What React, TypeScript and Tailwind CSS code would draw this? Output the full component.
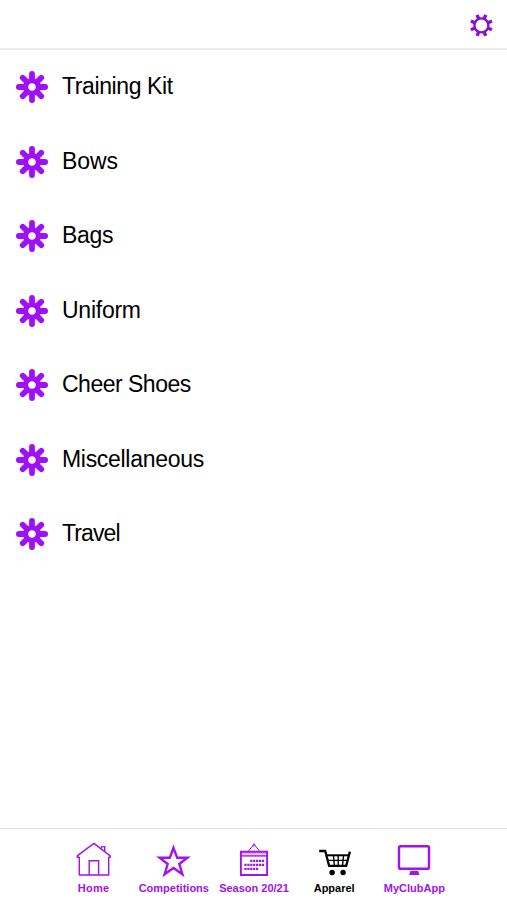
import React from 'react';

interface MenuItem {
  label: string;
  spacing: string;
}

interface TabItem {
  label: string;
  icon: React.ReactNode;
  active?: boolean;
  spacing?: string;
}

const menuItems: MenuItem[] = [
  { label: 'Training Kit', spacing: 'tracking-[-0.4px]' },
  { label: 'Bows', spacing: 'tracking-[-0.1px]' },
  { label: 'Bags', spacing: 'tracking-[-0.3px]' },
  { label: 'Uniform', spacing: 'tracking-[-0.25px]' },
  { label: 'Cheer Shoes', spacing: 'tracking-[-0.5px]' },
  { label: 'Miscellaneous', spacing: 'tracking-[-0.3px]' },
  { label: 'Travel', spacing: 'tracking-[-0.9px]' },
];

const angles = [0, 45, 90, 135, 180, 225, 270, 315];

const GearIcon: React.FC = () => (
  <svg width="26" height="26" viewBox="-13.4 -13.4 26 26" fill="none" stroke="#8a10d0">
    <circle r="7" strokeWidth="2.4" />
    {angles.map((angle) => (
      <path key={angle} d="M0 -7.4V-11.4" strokeWidth="3.4" transform={`rotate(${angle + 22.5})`} />
    ))}
  </svg>
);

const FlowerIcon: React.FC = () => (
  <svg width="34" height="34" viewBox="-17 -17 34 34" fill="none" stroke="#a010f5" strokeLinecap="round">
    <circle r="6.4" strokeWidth="5.2" />
    {angles.map((angle) => (
      <path key={angle} d="M0 -7V-13.1" strokeWidth="5.8" transform={`rotate(${angle})`} />
    ))}
  </svg>
);

const HomeIcon: React.FC = () => (
  <svg width="36" height="36" viewBox="0 0 36 36" fill="none" stroke="currentColor" strokeWidth="1.4">
    <path d="M1.3 13.9L17.9 1.4L34.2 13.9V15.2H32.7V33H3.3V15.2H1.3Z" strokeLinejoin="round" />
    <path d="M13.2 33V18.8H22.6V33M24.9 6.8L26.1 4.6H28.7V9.6" />
  </svg>
);

const StarIcon: React.FC = () => (
  <svg width="36" height="36" viewBox="0 0 36 36" fill="none" stroke="currentColor" strokeWidth="2.4">
    <path d="M17.5 5.8L21.2 15.8H31.4L23.3 22L26.4 32.2L17.5 26L8.6 32.2L11.7 22L3.6 15.8H13.8Z" />
  </svg>
);

const CalendarIcon: React.FC = () => (
  <svg width="36" height="36" viewBox="0 0 36 36" fill="none" stroke="currentColor" strokeWidth="1.9">
    <path d="M4.9 9.8H31.1V33H4.9Z" />
    <path d="M5 13.9H31" strokeWidth="1.4" />
    <path d="M5 11.6H31" strokeWidth="2" opacity=".35" />
    <path d="M12.3 9.2L17.1 3.4M18.9 3.4L23.7 9.2" strokeWidth="1" />
    <circle cx="18" cy="3" r="1.1" strokeWidth="1" />
    <path d="M14.2 18.9H28M8.4 22.9H28M8.4 26.9H22.2" strokeWidth="2.1" strokeDasharray="2.2 .7" />
  </svg>
);

const CartIcon: React.FC = () => (
  <svg width="36" height="36" viewBox="0 0 36 36" fill="none" stroke="currentColor" strokeWidth="2.3">
    <path d="M3.2 9H9.2L13.1 23.8H30.2L33.9 9.6" />
    <path d="M10.5 13.3H32.6" strokeWidth="2" />
    <path d="M11.7 18.4H31.4M17.4 13L18.4 24M22.2 13V24M27.6 13L26.5 24" strokeWidth="1.4" />
    <circle cx="16.1" cy="30.5" r="2.7" fill="currentColor" stroke="none" />
    <circle cx="27.1" cy="30.5" r="2.7" fill="currentColor" stroke="none" />
  </svg>
);

const MonitorIcon: React.FC = () => (
  <svg width="36" height="36" viewBox="0 0 36 36" fill="none" stroke="currentColor" strokeWidth="2.4">
    <rect x="3" y="4.2" width="30" height="22.6" rx="1.6" />
    <path d="M14.4 29H22.2L23.5 33H13.1Z" fill="currentColor" stroke="none" />
  </svg>
);

const tabs: TabItem[] = [
  { label: 'Home', icon: <HomeIcon />, spacing: 'tracking-[0.3px]' },
  { label: 'Competitions', icon: <StarIcon /> },
  { label: 'Season 20/21', icon: <CalendarIcon /> },
  { label: 'Apparel', icon: <CartIcon />, active: true },
  { label: 'MyClubApp', icon: <MonitorIcon /> },
];

const App: React.FC = () => {
  return (
    <div className="flex h-[900px] w-[507px] flex-col overflow-hidden bg-white font-['Liberation_Sans',Arial,sans-serif] text-black">
      <header className="flex h-[50px] shrink-0 items-center justify-end border-b-2 border-[#ececec] pt-[2px] pr-[13px]">
        <button aria-label="Settings">
          <GearIcon />
        </button>
      </header>

      <main className="min-h-0 flex-1">
        <ul>
          {menuItems.map((item) => (
            <li key={item.label} className="flex h-[74.5px] items-center pl-[14.5px]">
              <FlowerIcon />
              <span className={`-mt-[2.5px] ml-[13.5px] text-[23px] leading-7 whitespace-nowrap ${item.spacing}`}>
                {item.label}
              </span>
            </li>
          ))}
        </ul>
      </main>

      {/* Bottom tab bar */}
      <nav className="flex h-[72px] shrink-0 justify-center border-t border-[#e4e4e4] pt-[13px] pl-px">
        {tabs.map((tab) => (
          <button
            key={tab.label}
            className={`flex w-[80.2px] flex-col items-center ${tab.active ? 'text-black' : 'text-[#a112ec]'}`}
          >
            {tab.icon}
            <span className={`mt-[2.5px] text-[11px] leading-[14px] font-bold whitespace-nowrap ${tab.spacing ?? ''}`}>
              {tab.label}
            </span>
          </button>
        ))}
      </nav>
    </div>
  );
};

export default App;
